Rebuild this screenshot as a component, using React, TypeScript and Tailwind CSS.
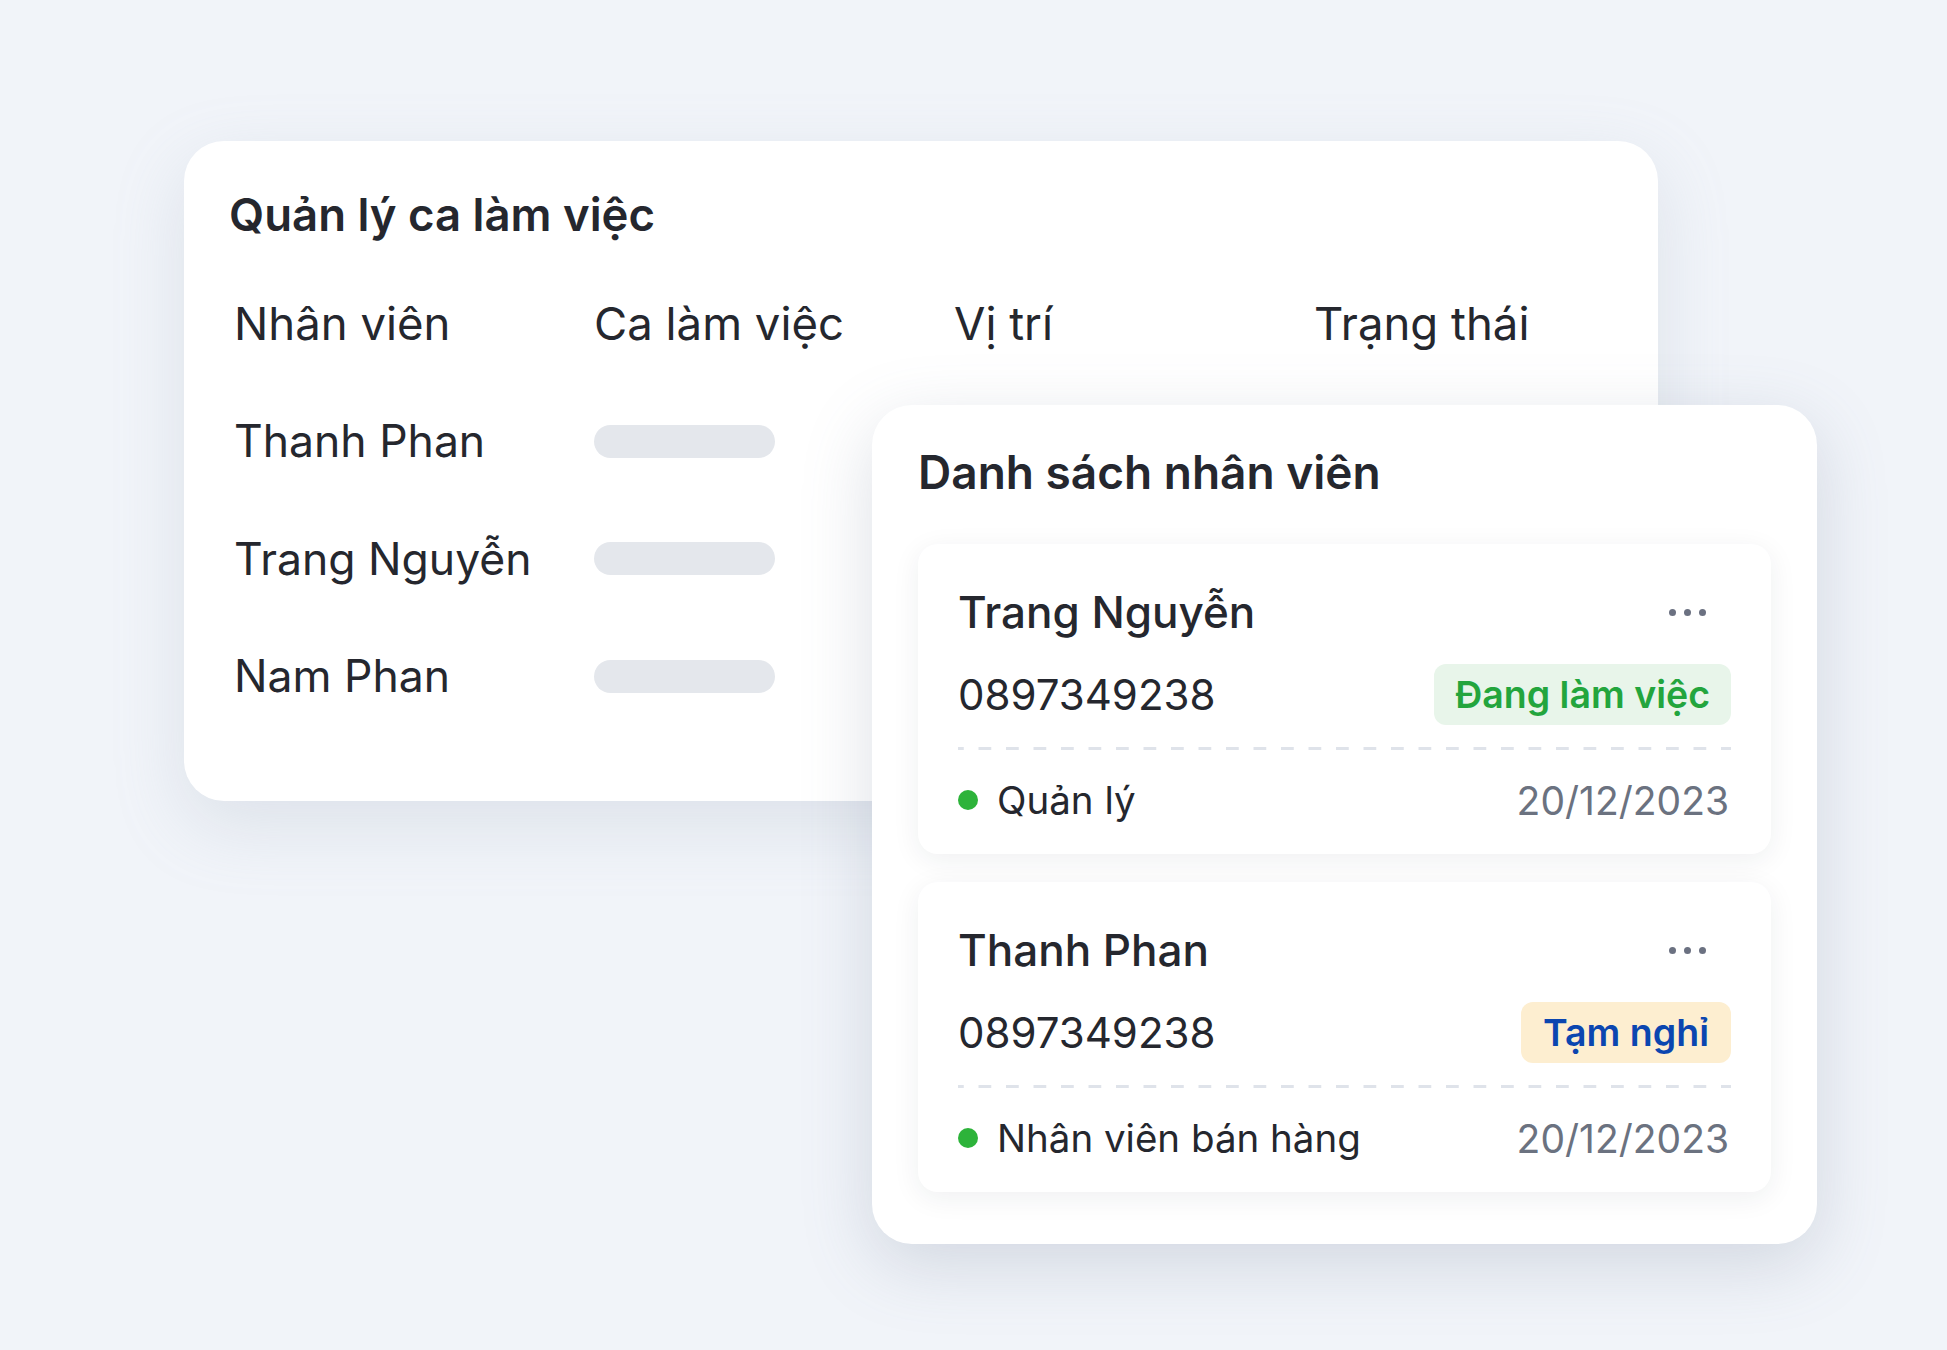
import React from "react";

type Staff = {
    name: string;
    phone: string;
    role: string;
    date: string;
    status: "working" | "off";
};

const SHIFT_ROWS = ["Thanh Phan", "Trang Nguyễn", "Nam Phan"];

const STAFF: Staff[] = [
    { name: "Trang Nguyễn", phone: "0897349238", role: "Quản lý", date: "20/12/2023", status: "working" },
    { name: "Thanh Phan", phone: "0897349238", role: "Nhân viên bán hàng", date: "20/12/2023", status: "off" },
];

const StatusBadge = ({ status }: { status: Staff["status"] }) => {
    if (status === "working") {
        return (
            <span className="h-[61px] inline-flex items-center rounded-[12px] bg-[#e8f5ea] px-[21px] text-[37.5px] font-semibold text-[#23a53d]">
                Đang làm việc
            </span>
        );
    }
    return (
        <span className="h-[61px] inline-flex items-center rounded-[12px] bg-[#fdeed0] px-[22px] text-[37.5px] font-semibold text-[#0b46b0]">
            Tạm nghỉ
        </span>
    );
};

const MoreDots = () => (
    <div className="mr-[25px] flex items-center gap-[8px]">
        <span className="h-[7px] w-[7px] rounded-full bg-[#6b7181]"></span>
        <span className="h-[7px] w-[7px] rounded-full bg-[#6b7181]"></span>
        <span className="h-[7px] w-[7px] rounded-full bg-[#6b7181]"></span>
    </div>
);

const StaffCard = ({ staff }: { staff: Staff }) => (
    <div className="h-[310px] rounded-[20px] bg-white px-10 pt-[44px] shadow-[0_6px_28px_rgba(30,41,59,0.07)]">
        <div className="flex h-12 items-center justify-between">
            <span className="text-[44px] font-medium text-[#25272e]">{staff.name}</span>
            <MoreDots />
        </div>
        <div className="mt-[28px] flex h-[61px] items-center justify-between">
            <span className="text-[42px] text-[#25272e]">{staff.phone}</span>
            <StatusBadge status={staff.status} />
        </div>
        <div className="mt-[22px] h-[3px] bg-[linear-gradient(90deg,#dfe3ea_0_13px,transparent_13px)] bg-[length:27.5px_3px] bg-[position:-7px_0] bg-repeat-x"></div>
        <div className="mt-[26px] flex h-12 items-center justify-between">
            <div className="flex items-center gap-[19px]">
                <span className="h-[20px] w-[20px] rounded-full bg-[#2db33a]"></span>
                <span className="text-[38.5px] text-[#25272e]">{staff.role}</span>
            </div>
            <span className="mr-[2px] text-[39px] text-[#6b7280]">{staff.date}</span>
        </div>
    </div>
);

const App = () => {
    return (
        <div className="min-h-screen w-full bg-[#f1f4f9] font-['Inter','Noto_Sans',sans-serif] leading-none">
            <div className="relative pl-[184px] pt-[141px]">
                {/* bảng ca làm việc */}
                <div className="h-[660px] w-[1474px] rounded-[40px] bg-white pl-[45px] pt-[50px] shadow-[0_24px_70px_rgba(148,163,184,0.22)]">
                    <h2 className="text-[45.5px] font-semibold leading-[48px] text-[#25272e]">Quản lý ca làm việc</h2>
                    <div className="ml-[5px] mt-[26px] grid grid-cols-[360px_360px_360px_1fr] text-[44.5px] text-[#25272e]">
                        <div className="flex h-[117.5px] items-center text-[45.5px]">Nhân viên</div>
                        <div className="flex h-[117.5px] items-center text-[45.5px]">Ca làm việc</div>
                        <div className="flex h-[117.5px] items-center text-[45.5px]">Vị trí</div>
                        <div className="flex h-[117.5px] items-center text-[45.5px]">Trạng thái</div>
                        {SHIFT_ROWS.map((name) => (
                            <React.Fragment key={name}>
                                <div className="flex h-[117.5px] items-center">{name}</div>
                                <div className="flex h-[117.5px] items-center">
                                    <div className="h-[33px] w-[181px] rounded-full bg-[#e4e7ec]"></div>
                                </div>
                                <div className="h-[117.5px]"></div>
                                <div className="h-[117.5px]"></div>
                            </React.Fragment>
                        ))}
                    </div>
                </div>

                {/* danh sách nhân viên */}
                <div className="absolute left-[872px] top-[405px] w-[945px] rounded-[40px] bg-white px-[46px] pb-[52px] pt-[43px] shadow-[0_20px_70px_rgba(100,116,139,0.22)]">
                    <h2 className="text-[46px] font-semibold leading-[48px] text-[#25272e]">Danh sách nhân viên</h2>
                    <div className="mt-[48px] flex flex-col gap-[28px]">
                        {STAFF.map((s) => (
                            <StaffCard key={s.name} staff={s} />
                        ))}
                    </div>
                </div>
            </div>
        </div>
    );
};

export default App;
